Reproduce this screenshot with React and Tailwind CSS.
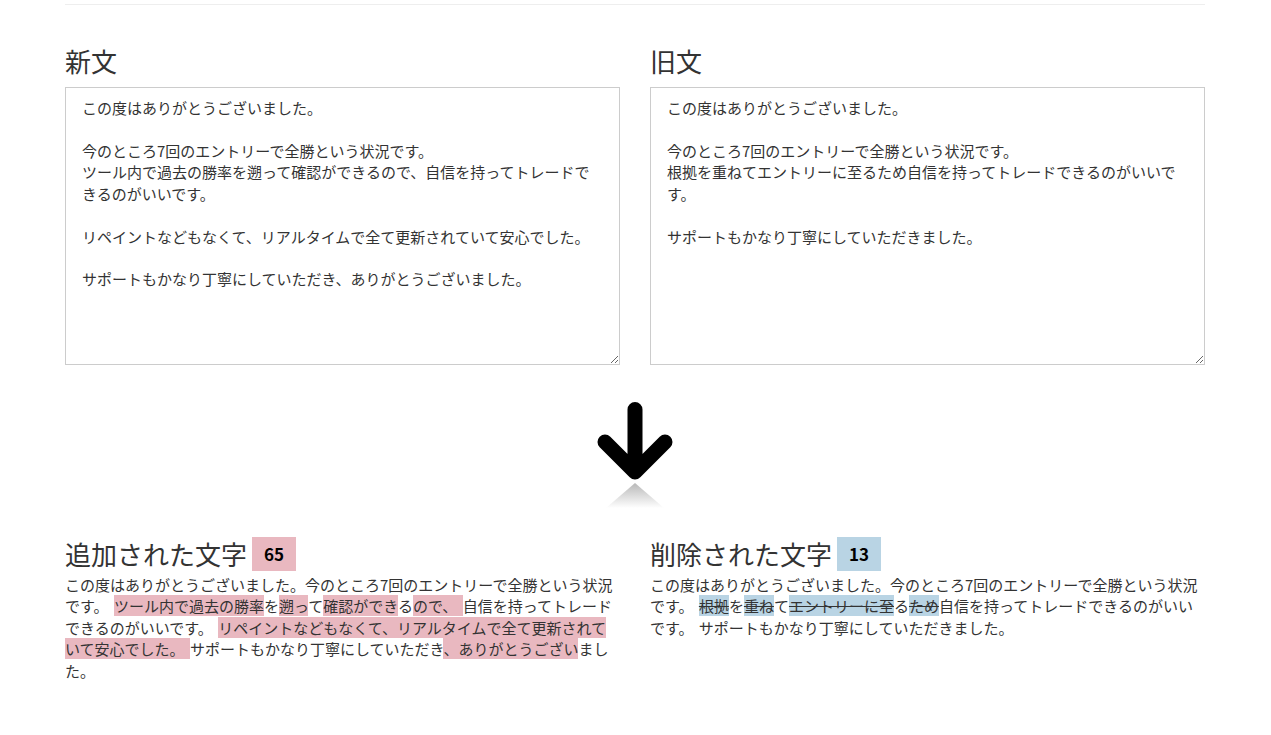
import React from 'react';

const font = { fontFamily: '"Noto Sans CJK JP", "Noto Sans", sans-serif' };

const newText =
  'この度はありがとうございました。\n\n今のところ7回のエントリーで全勝という状況です。\nツール内で過去の勝率を遡って確認ができるので、自信を持ってトレードできるのがいいです。\n\nリペイントなどもなくて、リアルタイムで全て更新されていて安心でした。\n\nサポートもかなり丁寧にしていただき、ありがとうございました。';

const oldText =
  'この度はありがとうございました。\n\n今のところ7回のエントリーで全勝という状況です。\n根拠を重ねてエントリーに至るため自信を持ってトレードできるのがいいです。\n\nサポートもかなり丁寧にしていただきました。';

// [text, changed]
const added = [
  ['この度はありがとうございました。今のところ7回のエントリーで全勝という状況です。 ', false],
  ['ツール内で過去の勝率', true],
  ['を', false],
  ['遡っ', true],
  ['て', false],
  ['確認ができ', true],
  ['る', false],
  ['ので、 ', true],
  ['自信を持ってトレードできるのがいいです。 ', false],
  ['リペイントなどもなくて、リアルタイムで全て更新されていて安心でした。 ', true],
  ['サポートもかなり丁寧にしていただき', false],
  ['、ありがとうござい', true],
  ['ました。', false],
];

const removed = [
  ['この度はありがとうございました。今のところ7回のエントリーで全勝という状況です。 ', false],
  ['根拠', true],
  ['を', false],
  ['重ね', true],
  ['て', false],
  ['エントリーに至', true],
  ['る', false],
  ['ため', true],
  ['自信を持ってトレードできるのがいいです。 サポートもかなり丁寧にしていただきました。', false],
];

const InputBox = ({ title, value }) => (
  <div>
    <h3 className="mt-[42px] mb-[12px] text-[26px] leading-[28px] font-normal text-[#333]">{title}</h3>
    <textarea
      defaultValue={value}
      style={font}
      className="block w-full h-[278px] border border-[#ccc] bg-white px-4 py-[9px] text-[15px] leading-[1.42857] text-[#333] outline-none"
    />
  </div>
);

const ResultBox = ({ title, count, parts, kind }) => {
  const badge = kind === 'add' ? 'bg-[#e9b8c0]' : 'bg-[#b9d4e4]';
  return (
    <div>
      <div className="flex items-center gap-[5px] h-[34px]">
        <h3 className="text-[26px] leading-[28px] font-normal text-[#333]">{title}</h3>
        <span className={`${badge} w-[44px] h-[34px] flex items-center justify-center text-[17px] font-bold text-black`}>
          {count}
        </span>
      </div>
      <p className="mt-[3px] text-[15px] leading-[1.42857] text-[#333] [word-spacing:2px]">
        {parts.map(([t, on], i) =>
          on ? (
            <span key={i} className={kind === 'add' ? 'bg-[#e9b8c0]' : 'bg-[#b9d4e4] line-through'}>
              {t}
            </span>
          ) : (
            <span key={i}>{t}</span>
          )
        )}
      </p>
    </div>
  );
};

export default function App() {
  return (
    <div className="min-h-screen bg-white" style={font}>
      <div className="w-[1141px] pr-px mx-auto">
        <div className="pt-[4px] border-b border-[#eee]" />

        <div className="grid grid-cols-2 gap-[30px]">
          <InputBox title="新文" value={newText} />
          <InputBox title="旧文" value={oldText} />
        </div>

        <div className="flex justify-center mt-[35px]">
          <svg width="80" height="110" viewBox="0 0 80 110">
            <defs>
              <linearGradient id="refl" x1="0" y1="0" x2="0" y2="1">
                <stop offset="0" stopColor="#b8b8b8" />
                <stop offset="1" stopColor="#ffffff" />
              </linearGradient>
            </defs>
            <path
              d="M40 9.5 V70 M10 42 L40 72 L70 42"
              fill="none"
              stroke="#000"
              strokeWidth="15"
              strokeLinecap="round"
              strokeLinejoin="round"
            />
            <path d="M40 83 L69 108 H11 Z" fill="url(#refl)" />
          </svg>
        </div>

        <div className="grid grid-cols-2 gap-[30px] mt-[27px]">
          <ResultBox title="追加された文字" count="65" parts={added} kind="add" />
          <ResultBox title="削除された文字" count="13" parts={removed} kind="del" />
        </div>
      </div>
    </div>
  );
}
